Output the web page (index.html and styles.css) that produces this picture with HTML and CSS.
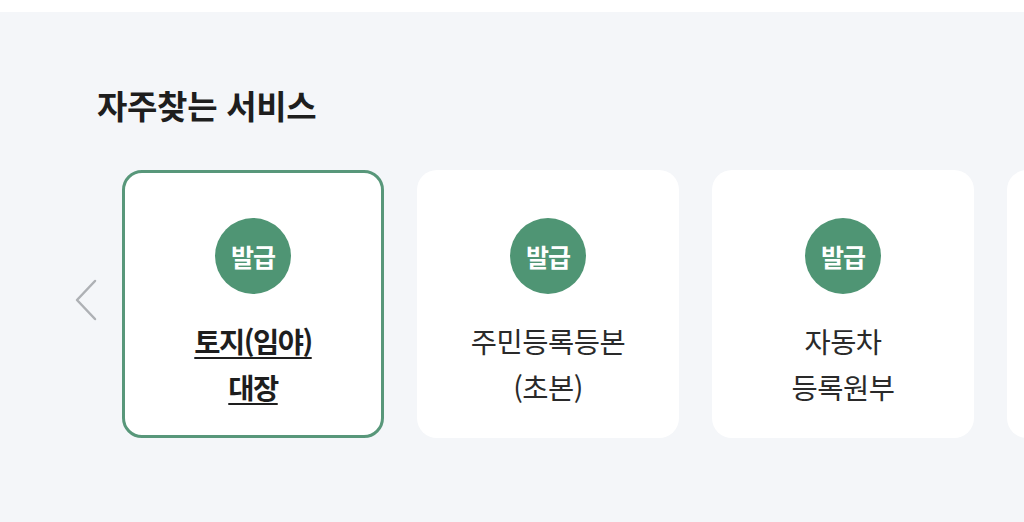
FILE: index.html
```html
<!DOCTYPE html>
<html lang="ko">
<head>
    <meta charset="UTF-8">
    <meta name="viewport" content="width=device-width, initial-scale=1.0">
    <title>자주찾는 서비스</title>
    <link rel="stylesheet" href="styles.css">
</head>
<body>
    <div class="top-strip"></div>

    <!-- 자주찾는 서비스 -->
    <section class="favorites">
        <h2 class="favorites-title">자주찾는 서비스</h2>

        <div class="slider">
            <button class="slider-prev" type="button" aria-label="이전">
                <svg width="26" height="44" viewBox="0 0 26 44">
                    <path d="M22 3 L4 22 L22 41" fill="none" stroke="#aeb1b5" stroke-width="2.5" stroke-linecap="round" stroke-linejoin="round"/>
                </svg>
            </button>

            <div class="slider-track">
                <a class="service-card active" href="#">
                    <span class="badge">발급</span>
                    <span class="service-name">토지(임야)<br>대장</span>
                </a>
                <a class="service-card" href="#">
                    <span class="badge">발급</span>
                    <span class="service-name">주민등록등본<br>(초본)</span>
                </a>
                <a class="service-card" href="#">
                    <span class="badge">발급</span>
                    <span class="service-name">자동차<br>등록원부</span>
                </a>
                <!-- 다음 슬라이드 (일부만 보임) -->
                <a class="service-card" href="#" aria-label="다음 서비스"></a>
            </div>
        </div>
    </section>
</body>
</html>
```

FILE: styles.css
```css
/* 기본 */
body {
    margin: 0;
    font-family: "Noto Sans CJK KR", "Noto Sans", sans-serif;
    background-color: #f4f6f9;
    color: #222;
    overflow: hidden;
}

.top-strip {
    height: 12px;
    background-color: #ffffff;
}

/* 자주찾는 서비스 */
.favorites {
    padding: 70px 0 80px 97px;
}

.favorites-title {
    margin: 0 0 42px;
    font-size: 33px;
    line-height: 46px;
    font-weight: 700;
    letter-spacing: -0.3px;
    color: #1e1e1e;
}

/* 슬라이더 */
.slider {
    position: relative;
    padding-left: 25px;
}

.slider-prev {
    position: absolute;
    left: -24px;
    top: 108px;
    padding: 0;
    border: none;
    background: none;
    cursor: pointer;
}

.slider-track {
    display: flex;
    gap: 33px;
}

.service-card {
    flex: 0 0 262px;
    height: 268px;
    box-sizing: border-box;
    display: flex;
    flex-direction: column;
    align-items: center;
    padding-top: 45px;
    background-color: #ffffff;
    border: 3px solid transparent;
    border-radius: 20px;
    text-decoration: none;
    color: #2a2a2a;
}

.service-card.active {
    border-color: #58977a;
}

.badge {
    width: 76px;
    height: 76px;
    border-radius: 50%;
    background-color: #4f9574;
    color: #ffffff;
    font-size: 25px;
    font-weight: 700;
    letter-spacing: -1px;
    display: flex;
    align-items: center;
    justify-content: center;
}

.service-name {
    margin-top: 24px;
    font-size: 28.5px;
    line-height: 46px;
    text-align: center;
    letter-spacing: -0.5px;
}

.service-card.active .service-name {
    font-weight: 600;
    letter-spacing: -1.5px;
    text-decoration: underline;
    text-underline-offset: 4px;
    text-decoration-thickness: 2px;
    color: #1e1e1e;
}
```
